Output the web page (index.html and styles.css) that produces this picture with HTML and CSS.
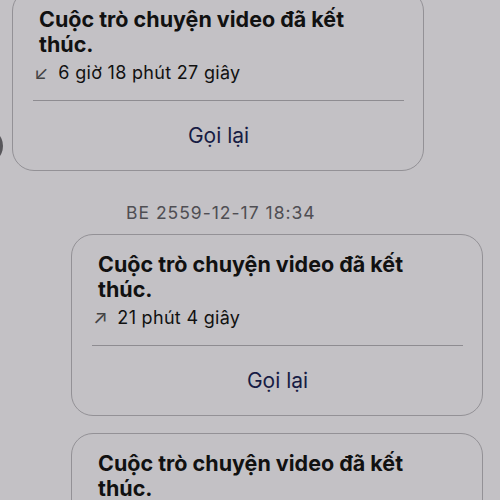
FILE: index.html
```html
<!DOCTYPE html>
<html lang="vi">
<head>
    <meta charset="UTF-8">
    <meta name="viewport" content="width=device-width, initial-scale=1.0">
    <title>Cuộc gọi video</title>
    <link rel="stylesheet" href="styles.css">
</head>
<body>
<div class="chat">
    <div class="row incoming">
        <div class="avatar"></div>
        <div class="call-card">
            <div class="call-title">Cuộc trò chuyện video đã kết thúc.</div>
            <div class="call-duration"><span class="arrow">&#8601;</span> 6 giờ 18 phút 27 giây</div>
            <div class="call-again">Gọi lại</div>
        </div>
    </div>

    <div class="timestamp">BE 2559-12-17 18:34</div>

    <div class="row outgoing">
        <div class="call-card">
            <div class="call-title">Cuộc trò chuyện video đã kết thúc.</div>
            <div class="call-duration"><span class="arrow">&#8599;</span> 21 phút 4 giây</div>
            <div class="call-again">Gọi lại</div>
        </div>
    </div>

    <div class="row outgoing">
        <div class="call-card">
            <div class="call-title">Cuộc trò chuyện video đã kết thúc.</div>
            <div class="call-duration"><span class="arrow">&#8599;</span> 21 phút 4 giây</div>
            <div class="call-again">Gọi lại</div>
        </div>
    </div>
</div>
</body>
</html>
```

FILE: styles.css
```css
body {
    margin: 0;
    height: 500px;
    background-color: #c3c1c5;
    font-family: Inter, "Liberation Sans", sans-serif;
    color: #111;
    overflow: hidden;
}
.chat {
    display: flex;
    flex-direction: column;
    margin-top: -11px;
}
.row {
    display: flex;
    align-items: flex-end;
}
.outgoing {
    padding-left: 71px;
    margin-bottom: 17px;
}
.avatar {
    width: 36px;
    height: 36px;
    margin-left: -33px;
    margin-right: 9px;
    margin-bottom: 7px;
    border-radius: 50%;
    background-color: #58575b;
}
.call-card {
    box-sizing: border-box;
    width: 412px;
    height: 182px;
    padding: 17px 19px 0 20px;
    border: 1.5px solid #939196;
    border-radius: 22px;
    display: flex;
    flex-direction: column;
}
.call-title {
    font-size: 21.5px;
    font-weight: 700;
    line-height: 25px;
    padding: 0 6px;
    width: 320px;
}
.call-duration {
    font-size: 18px;
    letter-spacing: 0.3px;
    line-height: 24px;
    margin-top: 4px;
    padding: 0 0 15px 1px;
    border-bottom: 1px solid #8e8c91;
}
.arrow {
    color: #444;
    display: inline-block;
    width: 19px;
    font-size: 19px;
}
.call-again {
    text-align: center;
    font-size: 21px;
    color: #171c44;
    padding-top: 22px;
}
.timestamp {
    margin: 31px 0 11px 126px;
    font-size: 17.5px;
    letter-spacing: 1px;
    color: #4f4e53;
}
```
